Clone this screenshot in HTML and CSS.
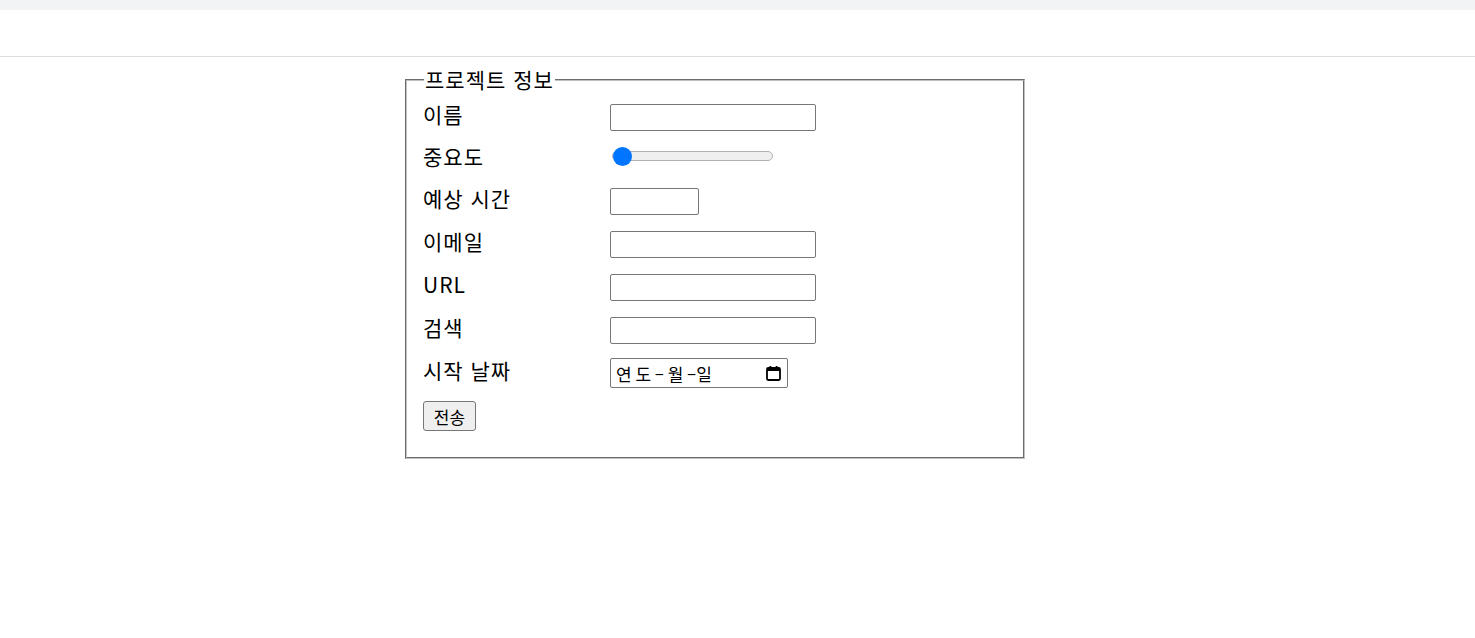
FILE: index.html
```html
<!DOCTYPE html>
<html lang="ko">
<head>
<meta charset="utf-8">
<title>프로젝트 정보</title>
<link rel="stylesheet" href="styles.css">
</head>
<body>
<div class="topbar"></div>
<header class="header"></header>
<main class="main">
  <form class="form">
    <fieldset class="box">
      <legend class="legend">프로젝트 정보</legend>
      <div class="row">
        <label class="label" for="name">이름</label>
        <input class="text" id="name" type="text">
      </div>
      <div class="row row-range">
        <label class="label" for="imp">중요도</label>
        <input class="range" id="imp" type="range" min="0" max="10" value="0">
      </div>
      <div class="row">
        <label class="label" for="hours">예상 시간</label>
        <input class="text num" id="hours" type="number">
      </div>
      <div class="row">
        <label class="label" for="mail">이메일</label>
        <input class="text" id="mail" type="email">
      </div>
      <div class="row">
        <label class="label" for="url">URL</label>
        <input class="text" id="url" type="url">
      </div>
      <div class="row">
        <label class="label" for="q">검색</label>
        <input class="text" id="q" type="search">
      </div>
      <div class="row row-date">
        <label class="label" for="start">시작 날짜</label>
        <div class="date">
          <span class="date-text">연 도 – 월 –일</span>
          <svg class="cal" width="17" height="17" viewBox="0 0 17 17" aria-hidden="true">
            <rect x="2" y="3" width="13" height="12" rx="1.2" fill="none" stroke="#000" stroke-width="1.8"/>
            <rect x="2" y="3" width="13" height="3" fill="#000"/>
            <rect x="4.5" y="1" width="1.8" height="3" fill="#000"/>
            <rect x="10.7" y="1" width="1.8" height="3" fill="#000"/>
          </svg>
        </div>
      </div>
      <div class="row row-btn">
        <button class="btn" type="button">전송</button>
      </div>
    </fieldset>
  </form>
</main>
</body>
</html>
```
FILE: styles.css
```css
html, body {
  margin: 0;
  padding: 0;
  background: #ffffff;
}
body {
  font-family: "Noto Sans CJK KR", "Noto Sans", "Liberation Sans", sans-serif;
  color: #000;
}
.topbar {
  height: 10px;
  background: #f1f3f4;
}
.header {
  height: 46px;
  border-bottom: 1px solid #dedede;
}
.main {
  padding-top: 8px;
}
.form {
  margin: 0 0 0 405px;
  width: 620px;
}
.box {
  margin: 0;
  box-sizing: border-box;
  width: 620px;
  border: 2px groove #c0c0c0;
  padding: 9px 16px 26px 16px;
}
.legend {
  font-size: 21px;
  line-height: 29px;
  letter-spacing: 1px;
  padding: 0 1px;
  margin-left: 1px;
}
.row {
  display: flex;
  align-items: center;
  min-height: 29px;
  margin-bottom: 14px;
}
.row-range {
  min-height: 27px;
  height: 27px;
  align-items: flex-start;
}
.row-date {
  margin-top: -1px;
  margin-bottom: 13px;
}
.row-btn {
  min-height: 30px;
  margin-bottom: 0;
}
.label {
  width: 187px;
  flex: none;
  font-size: 21px;
  line-height: 23px;
  padding-bottom: 6px;
  letter-spacing: 1px;
}
.row-range .label {
  margin-top: -1px;
}
.text {
  box-sizing: border-box;
  width: 206px;
  height: 27px;
  margin: 0;
  border: 1px solid #767676;
  border-radius: 2px;
  padding: 1px 3px;
  font-size: 16px;
  background: #fff;
}
.num {
  width: 89px;
}
.range {
  width: 161px;
  height: 18px;
  margin: 1px 0 0 2px;
  -webkit-appearance: none;
  appearance: none;
  background: transparent;
}
.range::-webkit-slider-runnable-track {
  height: 10px;
  border-radius: 5px;
  background: #efefef;
  border: 1px solid #b2b2b2;
  box-sizing: border-box;
}
.range::-webkit-slider-thumb {
  -webkit-appearance: none;
  width: 19px;
  height: 19px;
  border-radius: 50%;
  background: #0075ff;
  margin-top: -5.5px;
  border: none;
}
.date {
  box-sizing: border-box;
  width: 178px;
  height: 30px;
  border: 1px solid #767676;
  border-radius: 2px;
  display: flex;
  align-items: center;
  justify-content: space-between;
  padding: 0 5px 0 5px;
}
.date-text {
  font-size: 17px;
  line-height: 1;
  word-spacing: -1px;
}
.cal {
  display: block;
}
.btn {
  box-sizing: border-box;
  height: 30px;
  width: 53px;
  margin: 0;
  padding: 0 6px;
  font-family: "Noto Sans CJK KR", sans-serif;
  font-size: 17px;
  background: #efefef;
  border: 1px solid #767676;
  border-radius: 3px;
  color: #000;
}
```
